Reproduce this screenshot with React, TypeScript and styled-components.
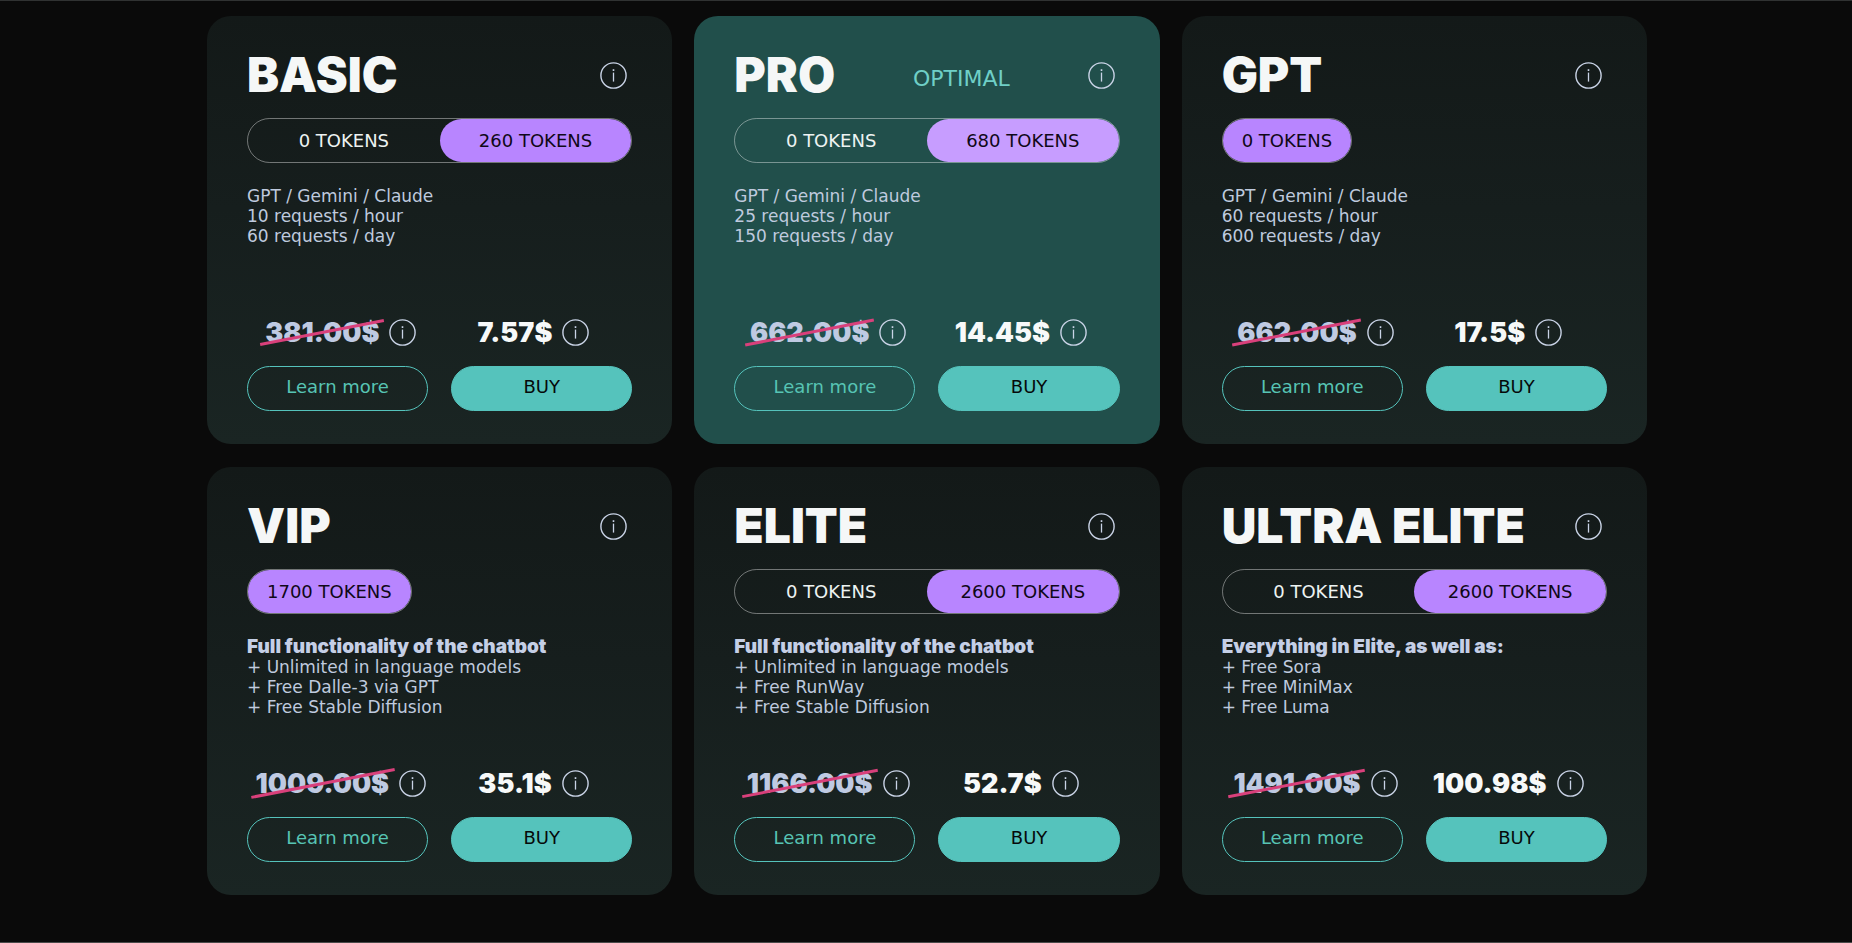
import React, { useState } from "react";
import styled, { createGlobalStyle } from "styled-components";

const heavy = 'Inter, "DejaVu Sans", sans-serif';

const GlobalStyle = createGlobalStyle`
  *, *::before, *::after { box-sizing: border-box; }
  body {
    margin: 0;
    background: #0a0a0a;
    font-family: "DejaVu Sans", Inter, sans-serif;
  }
  button { font-family: inherit; cursor: pointer; }
`;

const Page = styled.main`
  min-height: 100vh;
  padding: 15px 24px 45px 26px;
  border-top: 1px solid #303232;
  border-bottom: 1px solid #4a4a4a;
`;

const Plans = styled.div`
  display: grid;
  grid-template-columns: repeat(3, minmax(0, 1fr));
  gap: 23px 22px;
  max-width: 1440px;
  margin: 0 auto;
`;

const Card = styled.article<{ $featured?: boolean }>`
  display: flex;
  flex-direction: column;
  padding: 35px 40px 33px;
  border-radius: 24px;
  background: ${(p) => (p.$featured ? "#214f4b" : "linear-gradient(180deg, #131918 0%, #161e1d 45%, #1a2523 100%)")};
`;

const CardHeader = styled.header`
  display: flex;
  align-items: center;
  justify-content: space-between;
  height: 48px;
  margin-bottom: 19px;
  padding-right: 5px;
`;

const Title = styled.h2`
  margin: 0;
  color: #f5f7f7;
  font-family: ${heavy};
  font-size: 48px;
  line-height: 48px;
  font-weight: 900;
  white-space: nowrap;
`;

const Badge = styled.span`
  padding-top: 8px;
  color: #6fcfc7;
  font-size: 22px;
  line-height: 24px;
`;

const InfoButton = styled.button`
  display: block;
  flex: none;
  width: 27px;
  height: 27px;
  padding: 0;
  border: 0;
  background: none;
  color: #c9d3e6;
`;

const TokenSwitch = styled.div`
  display: flex;
  align-self: stretch;
  height: 45px;
  border: 1px solid rgba(255, 255, 255, 0.4);
  border-radius: 23px;
`;

const SingleToken = styled(TokenSwitch)`
  align-self: flex-start;
`;

const TokenOption = styled.button<{ $active: boolean; $featured?: boolean }>`
  flex: 1;
  padding: 0 19px;
  border: 0;
  border-radius: 22px;
  background: ${(p) => (p.$active ? (p.$featured ? "#c79dff" : "#b885ff") : "transparent")};
  color: ${(p) => (p.$active ? "#100818" : "#edf3f2")};
  font-size: 18px;
  line-height: 20px;
  white-space: nowrap;
`;

const Features = styled.div`
  min-height: 133px;
  margin-top: 23px;
  color: #bfcade;
  font-size: 17px;
  line-height: 20px;
`;

const Lead = styled.strong`
  display: block;
  color: #c5cfe6;
  font-family: ${heavy};
  font-size: 19px;
  font-weight: 900;
`;

const FeatureList = styled.ul`
  margin: 0;
  padding: 0;
  list-style: none;
`;

const Prices = styled.div`
  display: grid;
  grid-template-columns: 1fr 1fr;
  margin-bottom: 20px;
`;

const PriceCell = styled.div`
  display: flex;
  align-items: center;
  justify-content: center;
  gap: 10px;
  height: 27px;
  padding-right: 5px;
`;

const Price = styled.span`
  color: #f7f9f9;
  font-family: ${heavy};
  font-size: 27px;
  line-height: 27px;
  font-weight: 900;
`;

const OldPrice = styled.del`
  position: relative;
  color: #bfcae2;
  font-family: ${heavy};
  font-size: 27px;
  line-height: 27px;
  font-weight: 900;
  text-decoration: none;

  &::after {
    content: "";
    position: absolute;
    left: -6px;
    right: -6px;
    top: 12px;
    height: 3px;
    background: #d9407b;
    transform: rotate(-11deg);
  }
`;

const Actions = styled.div`
  display: grid;
  grid-template-columns: 1fr 1fr;
  gap: 23px;
`;

const ActionButton = styled.button<{ $primary?: boolean }>`
  height: 45px;
  padding: 0 0 4px;
  border: 1px solid #55c3bc;
  border-radius: 23px;
  background: ${(p) => (p.$primary ? "#55c3bc" : "transparent")};
  color: ${(p) => (p.$primary ? "#060a0a" : "#57c4b4")};
  font-size: 18px;
  line-height: 20px;
`;

function Info({ label }: { label: string }) {
  return (
    <InfoButton type="button" aria-label={label}>
      <svg width="27" height="27" viewBox="0 0 27 27" fill="none" stroke="currentColor" aria-hidden="true">
        <circle cx="13.5" cy="13.5" r="12.6" strokeWidth="1.4" />
        <path d="M13.5 10.6v9" strokeWidth="1.3" />
        <path d="M13.5 7.2v1.8" strokeWidth="1.6" />
      </svg>
    </InfoButton>
  );
}

type Plan = {
  name: string;
  badge?: string;
  tokens: string[];
  lead?: string;
  features: string[];
  oldPrice: string;
  price: string;
};

const chat = "GPT / Gemini / Claude";

const plans: Plan[] = [
  { name: "BASIC", tokens: ["0", "260"], features: [chat, "10 requests / hour", "60 requests / day"], oldPrice: "381.00$", price: "7.57$" },
  { name: "PRO", badge: "OPTIMAL", tokens: ["0", "680"], features: [chat, "25 requests / hour", "150 requests / day"], oldPrice: "662.00$", price: "14.45$" },
  { name: "GPT", tokens: ["0"], features: [chat, "60 requests / hour", "600 requests / day"], oldPrice: "662.00$", price: "17.5$" },
  {
    name: "VIP", tokens: ["1700"], lead: "Full functionality of the chatbot",
    features: ["+ Unlimited in language models", "+ Free Dalle-3 via GPT", "+ Free Stable Diffusion"],
    oldPrice: "1009.00$", price: "35.1$",
  },
  {
    name: "ELITE", tokens: ["0", "2600"], lead: "Full functionality of the chatbot",
    features: ["+ Unlimited in language models", "+ Free RunWay", "+ Free Stable Diffusion"],
    oldPrice: "1166.00$", price: "52.7$",
  },
  {
    name: "ULTRA ELITE", tokens: ["0", "2600"], lead: "Everything in Elite, as well as:",
    features: ["+ Free Sora", "+ Free MiniMax", "+ Free Luma"],
    oldPrice: "1491.00$", price: "100.98$",
  },
];

function PlanCard({ plan }: { plan: Plan }) {
  const [selected, setSelected] = useState(plan.tokens.length - 1);
  const featured = Boolean(plan.badge);
  const Switch = plan.tokens.length > 1 ? TokenSwitch : SingleToken;
  return (
    <Card $featured={featured}>
      <CardHeader>
        <Title>{plan.name}</Title>
        {plan.badge && <Badge>{plan.badge}</Badge>}
        <Info label={`About ${plan.name}`} />
      </CardHeader>
      <Switch role="group" aria-label="Tokens">
        {plan.tokens.map((amount, i) => (
          <TokenOption
            key={amount}
            type="button"
            $active={i === selected}
            $featured={featured}
            aria-pressed={i === selected}
            onClick={() => setSelected(i)}
          >
            {amount} TOKENS
          </TokenOption>
        ))}
      </Switch>
      <Features>
        {plan.lead && <Lead>{plan.lead}</Lead>}
        <FeatureList>
          {plan.features.map((f) => <li key={f}>{f}</li>)}
        </FeatureList>
      </Features>
      <Prices>
        <PriceCell>
          <OldPrice>{plan.oldPrice}</OldPrice>
          <Info label="About the regular price" />
        </PriceCell>
        <PriceCell>
          <Price>{plan.price}</Price>
          <Info label="About the current price" />
        </PriceCell>
      </Prices>
      <Actions>
        <ActionButton type="button">Learn more</ActionButton>
        <ActionButton type="button" $primary>BUY</ActionButton>
      </Actions>
    </Card>
  );
}

export default function App() {
  return (
    <>
      <GlobalStyle />
      <Page>
        <Plans>
          {plans.map((plan) => <PlanCard key={plan.name} plan={plan} />)}
        </Plans>
      </Page>
    </>
  );
}
